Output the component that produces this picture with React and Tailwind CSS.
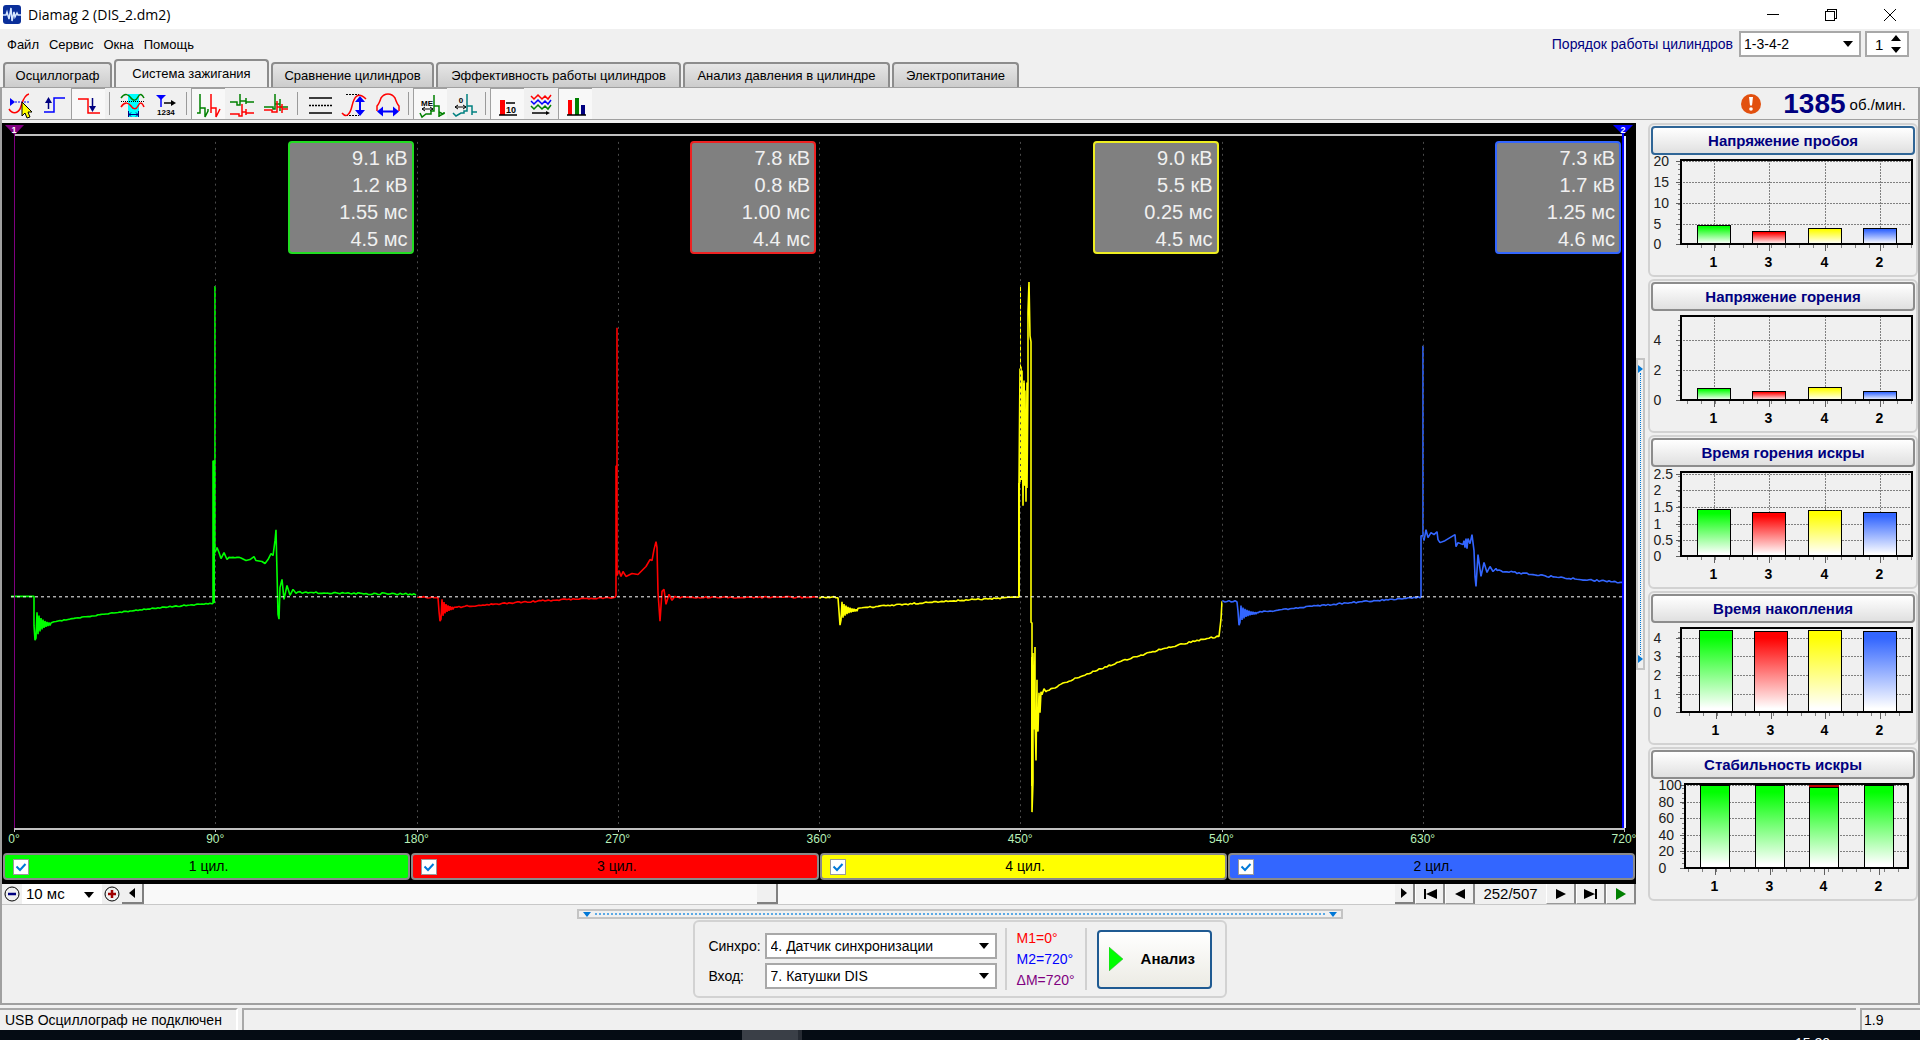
import React from 'react';

const COLORS = { green: '#00ff00', red: '#ff0000', yellow: '#ffff00', blue: '#3366ff' };

/* ---------- signal traces ---------- */

function noise(i) {
  const v = Math.sin(i * 12.9898) * 43758.5453;
  return v - Math.floor(v) - 0.5;
}

function ringing(x0, x1, base, amp) {
  let d = '';
  for (let x = x0, i = 0; x < x1; x += 1, i += 1) {
    const a = amp * Math.exp(-(x - x0) / ((x1 - x0) / 2.6));
    d += ` L${x},${(base + (i % 2 ? -a : a)).toFixed(1)}`;
  }
  return d;
}

function ramp(x0, y0, x1, y1, bend, rough) {
  let d = '';
  for (let x = x0; x <= x1; x += 2) {
    const t = (x - x0) / (x1 - x0);
    const y = y0 + (y1 - y0) * t + bend * 4 * t * (1 - t) + noise(x) * rough;
    d += ` L${x},${y.toFixed(1)}`;
  }
  return d;
}

const pts = (s) => ' L' + s.trim().split(/\s+/).join(' L');

const TRACES = [
  {
    color: COLORS.green,
    d:
      'M11,599 L34,599 L34,628 L35,643' + ringing(36, 52, 627, 14) + ramp(52, 625, 213, 606, -2, 1) +
      pts('213,606 213,463 215,463 215,287 215,555 217,550 219,555 221,561 224,555 227,562') +
      ramp(229, 560, 242, 560, 0, 2) +
      pts('246,563 250,562 254,559 256,563 262,564 265,566 268,562 271,556 273,558 275,543 276,532 277,575 278,617 279,622 280,590 282,582 284,602 287,588 290,598 293,592 296,596') +
      ramp(298, 595, 417, 597, 0, 2),
  },
  {
    color: COLORS.red,
    d:
      'M417,600' + ramp(418, 600, 438, 600, 0, 1.5) + ' L439,614 L440,624' + ringing(441, 455, 611, 11) +
      ramp(455, 610, 615, 600, -1, 1.5) +
      pts('616,598 616,468 617,468 617,329 617,578 619,573 621,579 623,574 626,579 632,576 638,577 642,573 646,569 650,562 652,563 654,552 656,544 657,550 658,595 660,624 662,594 664,592 666,607 669,597 672,603 675,599') +
      ramp(676, 600, 819, 600, 0, 1.5),
  },
  {
    color: COLORS.yellow,
    d:
      'M819,600' + ramp(820, 600, 838, 600, 0, 1.5) + ' L839,614 L840,628' + ringing(841, 858, 613, 10) +
      ramp(858, 611, 1018, 600, -1, 1.5) +
      pts('1019,600 1019,485 1020,370 1020,485 1021,368 1022,482 1022,372 1023,508 1024,382 1025,488 1025,392 1026,504 1027,384 1027,490 1028,384 1028,313 1029,283 1030,337 1031,343 1031,625 1032,626 1032,816 1033,786 1033,656 1034,733 1035,650 1035,720 1036,764 1037,683 1037,722 1038,735 1039,696 1040,716 1041,695 1042,698 1044,692 1046,695') +
      ramp(1047, 694, 1220, 639, -6, 1.5) + ' L1221,622 L1222,604',
  },
  {
    color: COLORS.blue,
    d:
      'M1222,604' + ramp(1223, 604, 1237, 604, 0, 1.5) + ' L1238,614 L1239,628' + ringing(1240, 1258, 616, 9) +
      ramp(1258, 615, 1420, 600, -1, 1.5) +
      pts('1421,600 1421,538 1423,538 1423,347 1423,538 1424,543 1426,532 1428,540 1431,535 1434,537 1437,534 1438,542 1440,545 1445,543 1450,540 1455,537 1456,549 1458,545 1463,547 1464,543 1465,550 1466,541 1467,551 1468,541 1470,546 1472,537 1474,553 1475,579 1476,589 1478,557 1481,579 1484,565 1487,575 1490,569 1493,574 1496,571') +
      ramp(1497, 573, 1624, 585, 1, 1.8),
  },
];

const GRID_X = [215, 417, 618, 819, 1020, 1222, 1423];

function ScopePlot() {
  return (
    <svg className="block h-full w-full" viewBox="2 123 1634 713" preserveAspectRatio="none" shapeRendering="crispEdges">
      <path d="M14 135.5H1624 M14 832.5H1624" stroke="#c0c0c0" strokeWidth="2" />
      {[14, ...GRID_X, 1624].map((x) => (
        <path key={x} d={`M${x + 0.5} 832V836`} stroke="#c0c0c0" />
      ))}
      <g fill="none" strokeLinejoin="bevel">
        {TRACES.map((t) => (
          <path key={t.color} d={t.d} stroke={t.color} strokeWidth="1.6" shapeRendering="auto" />
        ))}
        <path d="M1019 599V485 M1021 482V372 M1024 487V384 M1032 790V660" stroke={COLORS.yellow} strokeWidth="2" />
        <path d="M1020.5 370V286" stroke={COLORS.yellow} strokeDasharray="5 1" />
        <path d="M213.5 606V463" stroke={COLORS.green} strokeWidth="2" />
      </g>
      {GRID_X.map((x) => (
        <path key={x} d={`M${x + 0.5} 142V832`} stroke="#4a4a4a" strokeDasharray="2 4" />
      ))}
      <path d="M11 599.5H1624" stroke="#fff" strokeDasharray="3 3" />
      <path d="M14.5 134V832" stroke="#800080" />
      <path d="M1622.5 134V832" stroke="#0000ff" strokeWidth="2" />
      <path d="M1624.5 136V832" stroke="#e8e8ff" strokeWidth="2" />
      <g shapeRendering="auto">
        <path d="M5 125H24L14.500 135Z" fill="#800080" />
        <path d="M1613 125H1633L1623 135Z" fill="#0000ff" />
        <g fill="#fff" fontFamily="Liberation Sans" fontWeight="700" fontSize="9" textAnchor="middle">
          <text x="14" y="133">1</text>
          <text x="1623" y="133">2</text>
        </g>
      </g>
    </svg>
  );
}

const READOUTS = [
  { border: 'border-[#22dd22]', values: ['9.1 кВ', '1.2 кВ', '1.55 мс', '4.5 мс'] },
  { border: 'border-[#ee2222]', values: ['7.8 кВ', '0.8 кВ', '1.00 мс', '4.4 мс'] },
  { border: 'border-[#eeee22]', values: ['9.0 кВ', '5.5 кВ', '0.25 мс', '4.5 мс'] },
  { border: 'border-[#3366ff]', values: ['7.3 кВ', '1.7 кВ', '1.25 мс', '4.6 мс'] },
];

const CYLINDERS = [
  { id: 'c1', label: '1 цил.', bg: 'bg-[#00ff00]' },
  { id: 'c3', label: '3 цил.', bg: 'bg-[#ff0000]' },
  { id: 'c4', label: '4 цил.', bg: 'bg-[#ffff00]' },
  { id: 'c2', label: '2 цил.', bg: 'bg-[#3366ff]' },
];

const DEGREES = [0, 90, 180, 270, 360, 450, 540, 630, 720];

function Scope() {
  return (
    <div className="flex min-h-0 flex-1 flex-col bg-black pb-1">
      <div className="relative min-h-[560px] flex-1">
        <div className="absolute inset-0">
          <ScopePlot />
        </div>
        <div className="absolute inset-x-3 top-[18px] grid grid-cols-4">
          {READOUTS.map((r) => (
            <div key={r.values[0]} className="flex justify-end pr-[3px]">
              <div className={`flex h-[113px] w-[126px] flex-col rounded-sm border-2 bg-[#808080] pt-[2px] pr-1 text-right text-[20px] leading-[27px] text-[#f0f0f0] ${r.border}`}>
                {r.values.map((v, i) => (
                  <div key={i}>{v}</div>
                ))}
              </div>
            </div>
          ))}
        </div>
      </div>
      <div className="mx-3 flex h-[21px] justify-between text-[12px] leading-[14px] text-[#b8f0b8]">
        {DEGREES.map((d) => (
          <span key={d} className="flex w-0 justify-center">{d}°</span>
        ))}
      </div>
      <div className="flex gap-px px-px">
        {CYLINDERS.map((c) => (
          <label key={c.id} htmlFor={c.id} className={`flex h-[27px] flex-1 items-center rounded border-2 border-[#8a8a8a] pl-2 text-[14px] text-black ${c.bg}`}>
            <span className="relative h-4 w-4">
              <input id={c.id} type="checkbox" defaultChecked className="peer block h-4 w-4 appearance-none border border-[#9a9a9a] bg-white" />
              <svg viewBox="0 0 16 16" className="pointer-events-none absolute inset-0 hidden peer-checked:block" fill="none" stroke="#0078d7" strokeWidth="2">
                <path d="M3.500 7.500L7 11L12.500 5" />
              </svg>
            </span>
            <span className="flex-1 pr-5 text-center">{c.label}</span>
          </label>
        ))}
      </div>
    </div>
  );
}

/* ---------- toolbar ---------- */

const ICONS = {
  cursor: (
    <>
      <path d="M6 9L11 13L6 17Z" fill="#00f" />
      <path d="M11 13H25" stroke="#00f" strokeDasharray="2 1" />
      <path d="M5 20C8 25 13 25 16 20C18 16 19 6 25 5" stroke="#f00" strokeWidth="1.500" />
      <path d="M18 13V27L21 24L23 29L26 28L24 23H28Z" fill="#ff0" stroke="#000" />
    </>
  ),
  rise: (
    <>
      <path d="M6 23H16V9H27" stroke="#00f" strokeWidth="1.500" />
      <path d="M10.500 20V13" stroke="#000080" strokeWidth="1.500" />
      <path d="M7 14L10.500 8L14 14Z" fill="#000080" />
    </>
  ),
  fall: (
    <>
      <path d="M6 10H16V24H28" stroke="#f00" strokeWidth="1.500" />
      <path d="M20.500 9V18" stroke="#000080" strokeWidth="1.500" />
      <path d="M17 17L20.500 23L24 17Z" fill="#000080" />
    </>
  ),
  span: (
    <>
      <path d="M13 5H24V28H13Z" fill="#0ff" />
      <path d="M6 9C10 3 14 6 16 9S21 12 23 8S27 5 29 9" stroke="#008000" strokeWidth="1.500" />
      <path d="M6 18C10 12 14 14 16 17S21 21 23 17S27 13 29 18" stroke="#f00" strokeWidth="1.500" />
      <path d="M6 12.500H29" stroke="#000" strokeDasharray="1 1" />
      <path d="M13 25.500H24 M13.500 22V28 M23.500 22V28 M16 23.500L14 25.500L16 27.500 M21 23.500L23 25.500L21 27.500" stroke="#000080" />
    </>
  ),
  marker: (
    <>
      <path d="M7 6H17L12 11Z" fill="#00f" />
      <path d="M12 9V18" stroke="#00f" strokeWidth="1.500" />
      <path d="M15 14H24" stroke="#000" strokeWidth="1.500" />
      <path d="M22 11L27 14L22 17Z" fill="#000" />
      <text x="8" y="26" fontSize="8" fontWeight="700" fill="#000" fontFamily="Liberation Sans">1234</text>
    </>
  ),
  seq: (
    <g strokeWidth="1.500">
      <path d="M8 5V24 M5 24H8V19H13V28L16 22V20" stroke="#008000" />
      <path d="M19 5V24 M19 19H24V28L28 20" stroke="#f00" />
    </g>
  ),
  stacked: (
    <g strokeWidth="1.500">
      <path d="M4 13H11V16H14V5V12H20V9V15V13H28" stroke="#008000" />
      <path d="M4 25H13V27H16V15V23H20V20V26V24H28" stroke="#f00" />
    </g>
  ),
  overlay: (
    <g strokeWidth="1.500">
      <path d="M4 18H13V20H15V5V15H20V10V22V18H28" stroke="#008000" />
      <path d="M4 21H12V23H17V12V18H22V15V24V20H28" stroke="#f00" />
    </g>
  ),
  lines: (
    <g stroke="#000" strokeWidth="1.500">
      <path d="M6 9H29 M6 24H29" />
      <path d="M6 16.500H29" strokeDasharray="2 1" />
    </g>
  ),
  height: (
    <>
      <path d="M9 5.500H22 M9 26.500H22" stroke="#000" strokeDasharray="2 1" />
      <path d="M5 24C9 29 13 26 15 17C17 8 21 2 29 10" stroke="#f00" strokeWidth="1.500" />
      <path d="M23 12V22" stroke="#00f" strokeWidth="2" />
      <path d="M18 13L23 7L28 13Z M18 21L23 27L28 21Z" fill="#00f" />
    </>
  ),
  width: (
    <>
      <path d="M6 22V17C8 15 9 12 10 9C12 6 15 5 17 5S22 6 24 9C25 12 26 15 28 17V22" stroke="#f00" strokeWidth="1.500" />
      <path d="M11 22.500H23" stroke="#00f" strokeWidth="2" />
      <path d="M12 17.500V27.500L6 22.500Z M22 17.500V27.500L28 22.500Z" fill="#00f" />
    </>
  ),
  me: (
    <>
      <text x="7" y="17" fontSize="8" fontWeight="700" fill="#000" fontFamily="Liberation Sans">ME</text>
      <path d="M8 20H19 M11 18L8 20L11 22 M16 18L19 20L16 22" stroke="#000" />
      <path d="M6 24L8 28L12 25H17V22H20V6V17H25V28 M25 23L29 25L25 27 M29 24H31" stroke="#008000" strokeWidth="1.500" />
    </>
  ),
  zero: (
    <>
      <text x="13" y="14" fontSize="8" fontWeight="700" fill="#000" textAnchor="middle" fontFamily="Liberation Sans">0</text>
      <path d="M7 18H18 M10 16L7 18L10 20 M15 16L18 18L15 20" stroke="#000" />
      <path d="M5 24L8 27L13 24H16V22H19V5V17H24V26 M24 23H29" stroke="#008080" strokeWidth="1.500" />
    </>
  ),
  bar10: (
    <>
      <path d="M9 11H14V26H9Z" fill="#f00" />
      <path d="M15 14H24 M8 26H26" stroke="#000" strokeWidth="1.500" />
      <text x="15" y="24" fontSize="9" fontWeight="700" fill="#000" fontFamily="Liberation Sans">10</text>
    </>
  ),
  waves: (
    <g>
      {['#f00', '#00f', '#008000'].map((c, i) => (
        <path key={c} transform={`translate(0 ${i * 5})`} d="M6 7L9 10L13 6L17 10L20 7L23 10L26 6" stroke={c} strokeWidth="1.500" />
      ))}
      <path d="M7 24H22" stroke="#000" strokeWidth="1.500" />
      <path d="M21 22L25 24L21 26Z" fill="#000" />
    </g>
  ),
  bars: (
    <>
      <path d="M9 11H13V26H9Z" fill="#f00" />
      <path d="M16 9H20V26H16Z" fill="#008000" />
      <path d="M22 16H26V26H22Z" fill="#000080" />
      <path d="M8 26H27" stroke="#000" strokeWidth="1.500" />
    </>
  ),
};

const TOOLBAR = [
  [['cursor'], ['rise'], ['fall', true]],
  [['span'], ['marker']],
  [['seq', true], ['stacked'], ['overlay']],
  [['lines'], ['height'], ['width']],
  [['me', true], ['zero']],
  [['bar10', true], ['waves'], ['bars', true]],
];

function Toolbar() {
  return (
    <div className="flex h-8 items-stretch border-b border-[#a0a0a0] pl-px">
      {TOOLBAR.map((group, gi) => (
        <React.Fragment key={gi}>
          {gi > 0 && (
            <div className="flex w-[9px] justify-center py-1">
              <div className="w-px bg-[#9a9a9a]" />
            </div>
          )}
          {group.map(([name, on]) => (
            <button key={name} aria-label={name} className={on ? 'w-[34px] border-t border-l border-[#a0a0a0] bg-[#f8f8f8]' : 'w-[34px] border-t border-l border-transparent'}>
              <svg viewBox="0 0 34 30" width="34" height="30" fill="none">{ICONS[name]}</svg>
            </button>
          ))}
        </React.Fragment>
      ))}
      <div className="ml-auto flex items-center pr-3">
        <svg width="20" height="20" viewBox="0 0 20 20" className="mr-[22px]">
          <circle cx="10" cy="10" r="10" fill="#e2500f" />
          <path d="M8 3H12L11 11.500H9Z" fill="#fff" />
          <circle cx="10" cy="15" r="1.800" fill="#fff" />
        </svg>
        <span className="text-[28px] leading-8 font-bold text-[#000080]">1385</span>
        <span className="ml-1 pt-1 text-[15px]">об./мин.</span>
      </div>
    </div>
  );
}

/* ---------- side charts ---------- */

const CHARTS = [
  {
    title: 'Напряжение пробоя', focus: true, left: 1679, right: 1911,
    ticks: [['20', 41], ['15', 62], ['10', 83], ['5', 104], ['0', 124]], centers: [1713, 1768, 1824, 1879], tops: [105, 111, 108, 108], vgrid: true,
  },
  {
    title: 'Напряжение горения', left: 1679, right: 1911,
    ticks: [['4', 64], ['2', 94], ['0', 124]], centers: [1713, 1768, 1824, 1879], tops: [112, 115, 111, 115], vgrid: true,
  },
  {
    title: 'Время горения искры', left: 1679, right: 1911,
    ticks: [['2.5', 42], ['2', 58], ['1.5', 75], ['1', 92], ['0.5', 108], ['0', 124]], centers: [1713, 1768, 1824, 1879], tops: [77, 80, 78, 80], vgrid: true,
  },
  {
    title: 'Время накопления', left: 1679, right: 1911,
    ticks: [['4', 50], ['3', 68], ['2', 87], ['1', 106], ['0', 124]], centers: [1715, 1770, 1824, 1879], tops: [42, 43, 42, 43],
  },
  {
    title: 'Стабильность искры', left: 1683, right: 1907, allGreen: true,
    ticks: [['100', 41], ['80', 58], ['60', 74], ['40', 91], ['20', 107], ['0', 124]], centers: [1714, 1769, 1823, 1878], tops: [41, 41, 43, 41],
  },
];

const SERIES = ['green', 'red', 'yellow', 'blue'];
const NAMES = ['1', '3', '4', '2'];

function SideChart({ chart }) {
  const { left, right, ticks, centers, tops, vgrid, allGreen } = chart;
  const half = allGreen ? 15 : 17;
  const labelX = allGreen ? 1658 : 1653;
  const minor = [];
  for (let x = centers[0] - 27; x < right; x += 14) minor.push(x);
  const minorY = [];
  for (let y = 44; y < 124; y += 5) minorY.push(y);
  return (
    <svg viewBox="1651 35 263 116" className="block h-[116px] w-full" fontFamily="Liberation Sans" fontSize="14">
      <g shapeRendering="crispEdges">
        {ticks.map(([, y]) => (
          <path key={y} d={`M${left} ${y + 0.5}H${right}`} stroke="#808080" strokeDasharray="2 1" />
        ))}
        {vgrid && centers.map((x) => <path key={x} d={`M${x + 0.5} 40V124`} stroke="#808080" strokeDasharray="2 1" />)}
        {ticks.map(([, y]) => <path key={y} d={`M${left - 4} ${y + 0.5}H${left}`} stroke="#606060" />)}
        {minorY.map((y) => <path key={y} d={`M${left - 2} ${y + 0.5}H${left}`} stroke="#808080" />)}
        {minor.map((x) => <path key={x} d={`M${x + 0.5} 125V128`} stroke="#808080" />)}
        {centers.map((x) => <path key={x} d={`M${x + 0.5} 125V131`} stroke="#606060" />)}
        {centers.map((x, i) => (
          <g key={x}>
            {allGreen && i === 2 && <rect x={x - half} y="40" width={half * 2} height="3" fill="#c00000" />}
            <rect
              x={x - half + 0.5} y={tops[i] + 0.5} width={half * 2 - 1} height={124 - tops[i]}
              fill={`url(#fill-${allGreen ? 'green' : SERIES[i]})`} stroke="#000"
            />
          </g>
        ))}
        <rect x={left + 1} y="40" width={right - left - 1} height="84" fill="none" stroke="#000" strokeWidth="2" />
      </g>
      {ticks.map(([t, y]) => <text key={t} x={labelX} y={y + 5} fill="#202020">{t}</text>)}
      {centers.map((x, i) => (
        <text key={x} x={x} y="147" textAnchor="middle" fontWeight="700">{NAMES[i]}</text>
      ))}
    </svg>
  );
}

function Sidebar() {
  return (
    <aside className="flex w-[270px] shrink-0 flex-col gap-[2px]">
      <svg width="0" height="0" className="absolute">
        <defs>
          {SERIES.map((s) => (
            <linearGradient key={s} id={`fill-${s}`} x1="0" y1="0" x2="0" y2="1">
              <stop offset="0.080" stopColor={COLORS[s]} />
              <stop offset="0.950" stopColor="#fff" />
            </linearGradient>
          ))}
        </defs>
      </svg>
      {CHARTS.map((c) => (
        <section key={c.title} className="h-[154px] rounded-md border-2 border-[#d2d2d2] px-px pt-px">
          <button className={`block h-[29px] w-full rounded-sm border-2 bg-gradient-to-b from-white to-[#e0e0e0] text-[15px] leading-[25px] font-bold text-[#000080] ${c.focus ? 'border-[#2f6596]' : 'border-[#8c8c8c]'}`}>
            {c.title}
          </button>
          <SideChart chart={c} />
        </section>
      ))}
    </aside>
  );
}

/* ---------- small controls ---------- */

function Dropdown({ id, label, value, box, text }) {
  return (
    <span className={`relative block ${box}`}>
      <select id={id} aria-label={label} defaultValue={value} className={`block h-full w-full appearance-none border-2 border-[#a8a8a8] bg-white text-black ${text}`}>
        <option>{value}</option>
      </select>
      <svg width="10" height="6" viewBox="0 0 10 6" className="pointer-events-none absolute top-1/2 right-2 -translate-y-1/2">
        <path d="M0 0H10L5 6Z" fill="#000" />
      </svg>
    </span>
  );
}

const NAV_ICONS = {
  first: { d: 'M2 2H4V12H2Z M4 7L15 2V12Z', color: '#000' },
  prev: { d: 'M3 7L13 2V12Z', color: '#000' },
  next: { d: 'M13 7L3 2V12Z', color: '#000' },
  last: { d: 'M12 2H14V12H12Z M12 7L1 2V12Z', color: '#000' },
  play: { d: 'M13 7L3 1V13Z', color: '#008000' },
};

function NavButton({ name }) {
  const icon = NAV_ICONS[name];
  return (
    <button aria-label={name} className="flex w-[30px] items-center justify-center border-r-2 border-b border-l border-r-[#888] border-b-[#999] border-l-white bg-[#f0f0f0]">
      <svg width="16" height="14" viewBox="0 0 16 14" fill={icon.color}><path d={icon.d} /></svg>
    </button>
  );
}

function RoundButton({ plus }) {
  return (
    <button aria-label={plus ? 'Увеличить' : 'Уменьшить'} className="flex w-5 shrink-0 items-center justify-center bg-[#f0f0f0]">
      <svg width="16" height="16" viewBox="0 0 16 16" fill="none">
        <circle cx="8" cy="8" r="7" stroke="#000" />
        <path d={plus ? 'M4 8H12M8 4V12' : 'M4 8H12'} stroke={plus ? '#a00000' : '#000080'} strokeWidth="2.500" />
      </svg>
    </button>
  );
}

function ScrollRow() {
  return (
    <div className="flex h-[21px] items-stretch border-b border-[#c8c8c8]">
      <RoundButton />
      <span className="relative w-20">
        <select aria-label="Развёртка" defaultValue="10 мс" className="block h-full w-full appearance-none bg-white pl-1 text-[15px] leading-5">
          <option>10 мс</option>
        </select>
        <svg width="10" height="6" viewBox="0 0 10 6" className="pointer-events-none absolute top-2 right-2"><path d="M0 0H10L5 6Z" /></svg>
      </span>
      <RoundButton plus />
      <button aria-label="Влево" className="flex w-[22px] items-center justify-center border-r-2 border-b-2 border-[#808080] bg-[#f0f0f0]">
        <svg width="6" height="10" viewBox="0 0 6 10"><path d="M0 5L6 0V10Z" /></svg>
      </button>
      <div className="flex flex-1 bg-[#f9f9f9]">
        <div className="w-[49%]" />
        <button aria-label="Ползунок" className="w-[21px] border-r-2 border-b-2 border-[#808080] bg-[#f0f0f0]" />
      </div>
      <button aria-label="Вправо" className="flex w-5 items-center justify-center border-r-2 border-b-2 border-[#808080] bg-[#f0f0f0]">
        <svg width="6" height="10" viewBox="0 0 6 10"><path d="M6 5L0 0V10Z" /></svg>
      </button>
      <NavButton name="first" />
      <NavButton name="prev" />
      <span className="w-[71px] text-center text-[15px] leading-5">252/507</span>
      <NavButton name="next" />
      <NavButton name="last" />
      <NavButton name="play" />
    </div>
  );
}

/* ---------- page parts ---------- */

function TitleBar() {
  return (
    <header className="flex h-[29px] items-center bg-white pl-[3px]">
      <svg width="18" height="19" viewBox="0 0 18 19" className="mr-[7px]">
        <rect width="18" height="19" rx="3" fill="#0a2f9a" />
        <path d="M0 10H3L4 7L6 14L8 3L9 16L11 7L12 12L14 8L15 10H18" stroke="#d8e8ff" strokeWidth="1.500" fill="none" />
      </svg>
      <h1 className="font-['Open_Sans','Noto_Sans',sans-serif] text-[14px]">Diamag 2 (DIS_2.dm2)</h1>
      <div className="ml-auto flex">
        <button aria-label="Свернуть" className="flex h-[28px] w-[59px] items-center justify-center">
          <svg width="12" height="12" viewBox="0 0 12 12" shapeRendering="crispEdges"><path d="M0 5.500H12" stroke="#000" /></svg>
        </button>
        <button aria-label="Развернуть" className="flex h-[28px] w-[58px] items-center justify-center">
          <svg width="12" height="12" viewBox="0 0 12 12" fill="none" stroke="#000" shapeRendering="crispEdges">
            <path d="M0.500 2.500H9.500V11.500H0.500Z M2.500 2.500V0.500H11.500V9.500H9.500" />
          </svg>
        </button>
        <button aria-label="Закрыть" className="flex h-[28px] w-[60px] items-center justify-center">
          <svg width="12" height="12" viewBox="0 0 12 12" stroke="#000"><path d="M0 0L12 12M12 0L0 12" /></svg>
        </button>
      </div>
    </header>
  );
}

const TABS = [
  ['Осциллограф', 'w-[109px]'],
  ['Система зажигания', 'w-[155px]', true],
  ['Сравнение цилиндров', 'w-[163px]'],
  ['Эффективность работы цилиндров', 'w-[245px]'],
  ['Анализ давления в цилиндре', 'w-[207px]'],
  ['Электропитание', 'w-[127px]'],
];

function MenuAndTabs() {
  return (
    <div className="flex justify-between">
      <div>
        <nav className="flex h-[30px] items-center gap-[10px] pt-px pl-[7px] text-[13px]">
          {['Файл', 'Сервис', 'Окна', 'Помощь'].map((m) => (
            <button key={m}>{m}</button>
          ))}
        </nav>
        <div className="flex h-[28px] items-end gap-[2px] pl-[3px] text-[13px] whitespace-nowrap" role="tablist">
          {TABS.map(([t, w, active]) => (
            <button
              key={t} role="tab" aria-selected={!!active}
              className={
                active
                  ? `h-[28px] shrink-0 rounded-t border-2 border-b-0 border-[#8c8c8c] bg-[#f0f0f0] ${w}`
                  : `h-[25px] shrink-0 rounded-t border-2 border-b-0 border-[#8c8c8c] bg-gradient-to-b from-[#e6e6e6] to-[#cccccc] ${w}`
              }
            >
              {t}
            </button>
          ))}
        </div>
      </div>
      <div className="flex h-[28px] items-center pt-[2px] pr-[11px]">
        <label htmlFor="order" className="mr-[6px] text-[14px] text-[#000080]">Порядок работы цилиндров</label>
        <Dropdown id="order" label="Порядок работы цилиндров" value="1-3-4-2" box="h-[26px] w-[122px]" text="pl-[3px] text-[14px]" />
        <span className="relative ml-[4px] block h-[26px] w-[44px]">
          <input aria-label="Цилиндр" defaultValue="1" className="block h-full w-full border-2 border-[#a8a8a8] bg-white pl-2 text-[15px]" />
          <svg width="10" height="18" viewBox="0 0 10 18" className="pointer-events-none absolute top-1 right-2"><path d="M0 6L5 0L10 6Z M0 12H10L5 18Z" /></svg>
        </span>
      </div>
    </div>
  );
}

function VerticalSplitter() {
  return (
    <div className="mr-[3px] flex w-[9px] flex-col items-center self-center border-2 border-[#c4c4c4]">
      <svg width="5" height="8" viewBox="0 0 5 8" className="mt-[5px]" fill="#0078d7"><path d="M0 0L5 4L0 8Z" /></svg>
      <div className="h-[282px] border-l border-dotted border-[#0078d7]" />
      <svg width="5" height="8" viewBox="0 0 5 8" className="mb-[5px]" fill="#0078d7"><path d="M0 0L5 4L0 8Z" /></svg>
    </div>
  );
}

function BottomPanel() {
  return (
    <div className="flex flex-col items-center border-b-2 border-[#a0a0a0] pt-1 pb-[5px]">
      <div className="flex h-[10px] w-2/5 items-center justify-between gap-1 border-2 border-[#c4c4c4] px-1">
        <svg width="8" height="5" viewBox="0 0 8 5" fill="#0078d7"><path d="M0 0H8L4 5Z" /></svg>
        <div className="flex-1 border-t-2 border-dotted border-[#5aa9e6]" />
        <svg width="8" height="5" viewBox="0 0 8 5" fill="#0078d7"><path d="M0 0H8L4 5Z" /></svg>
      </div>
      <div className="mt-px flex h-[78px] items-center rounded-md border-2 border-[#d2d2d2] pr-[13px] pl-[13px]">
        <div className="grid grid-cols-[auto_232px] items-center gap-x-1 gap-y-1 pt-1 text-[14px]">
          <label htmlFor="sync">Синхро:</label>
          <Dropdown id="sync" label="Синхро" value="4.  Датчик синхронизации" box="h-[26px]" text="pl-1 text-[14px] whitespace-pre" />
          <label htmlFor="input">Вход:</label>
          <Dropdown id="input" label="Вход" value="7.  Катушки DIS" box="h-[26px]" text="pl-1 text-[14px] whitespace-pre" />
        </div>
        <div className="ml-2 flex h-[62px] w-[82px] flex-col justify-between border-x-2 border-[#d0d0d0] pl-[10px] text-[14px] leading-[20px]">
          <span className="text-[#ff0000]">М1=0°</span>
          <span className="text-[#0000ff]">М2=720°</span>
          <span className="text-[#800080]">ΔМ=720°</span>
        </div>
        <button className="ml-[10px] flex h-[59px] w-[115px] items-center rounded-sm border-2 border-[#1f5a92] bg-gradient-to-b from-white to-[#ecebe4] pl-[10px] text-[15px] font-bold">
          <svg width="14" height="24" viewBox="0 0 14 24"><path d="M0 0L14 12L0 24Z" fill="#00ff00" stroke="#40a040" strokeWidth="0.500" /></svg>
          <span className="ml-[18px]">Анализ</span>
        </button>
      </div>
    </div>
  );
}

function StatusBar() {
  return (
    <footer className="mt-[3px] flex h-[22px] gap-1 text-[14px] leading-[20px]">
      <span className="w-[238px] border-t-2 border-r-2 border-t-[#a8a8a8] border-r-white pl-[5px] whitespace-nowrap">USB Осциллограф не подключен</span>
      <span className="flex-1 border-t-2 border-l-2 border-[#a8a8a8]" />
      <span className="w-[60px] border-t-2 border-l-2 border-[#a8a8a8] pl-[2px]">1.9</span>
    </footer>
  );
}

function Taskbar() {
  return (
    <div className="flex h-[10px] overflow-hidden bg-[#050c14]">
      <div className="ml-[742px] w-[56px] bg-[#3a3f47]" />
      <div className="w-1 bg-[#262b33]" />
      <time className="mt-[5px] mr-[90px] ml-auto text-[14px] leading-4 text-white">15:20</time>
    </div>
  );
}

export default function App() {
  return (
    <div className="flex min-h-screen flex-col bg-[#f0f0f0] font-['Liberation_Sans',Arial,sans-serif] text-[13px] text-black">
      <TitleBar />
      <MenuAndTabs />
      <main className="flex flex-1 flex-col border-t border-r-2 border-l-2 border-[#a0a0a0]">
        <Toolbar />
        <div className="flex flex-1 pt-[3px]">
          <div className="flex min-w-0 flex-1 flex-col">
            <Scope />
            <ScrollRow />
          </div>
          <VerticalSplitter />
          <Sidebar />
        </div>
        <BottomPanel />
      </main>
      <StatusBar />
      <Taskbar />
    </div>
  );
}
